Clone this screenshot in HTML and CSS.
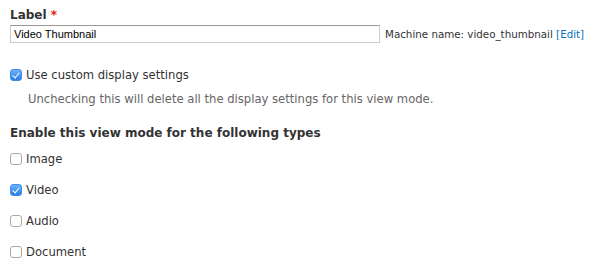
FILE: index.html
```html
<!DOCTYPE html>
<html lang="en">
<head>
  <meta charset="UTF-8" />
  <title>View mode</title>
  <link rel="stylesheet" href="styles.css">
</head>
<body>
  <form class="view-mode-form">
    <div class="form-item">
      <label class="form-label" for="label">Label <span class="required">*</span></label>
      <div class="machine-row">
        <input class="form-text" type="text" id="label" value="Video Thumbnail" />
        <span class="machine-name">Machine name: video_thumbnail <span class="edit">[<a href="#">Edit</a>]</span></span>
      </div>
    </div>

    <div class="form-item custom-settings">
      <label class="check">
        <span class="box checked"></span>
        Use custom display settings
      </label>
      <div class="description">Unchecking this will delete all the display settings for this view mode.</div>
    </div>

    <div class="form-item types">
      <div class="form-label">Enable this view mode for the following types</div>
      <label class="check type"><span class="box"></span>Image</label>
      <label class="check type"><span class="box checked"></span>Video</label>
      <label class="check type"><span class="box"></span>Audio</label>
      <label class="check type"><span class="box"></span>Document</label>
    </div>
  </form>
</body>
</html>
```

FILE: styles.css
```css
* {
  margin: 0;
  padding: 0;
  box-sizing: border-box;
}

body {
  background: #fff;
  color: #222;
  font-family: 'DejaVu Sans', 'Liberation Sans', sans-serif;
  font-size: 12px;
}

.view-mode-form {
  padding: 7px 10px;
}

.form-label {
  display: block;
  font-weight: bold;
  font-size: 12px;
  color: #333;
  line-height: 16px;
}

.required {
  color: #e32700;
}

.machine-row {
  display: flex;
  align-items: center;
  margin-top: 2px;
  white-space: nowrap;
}

.form-text {
  width: 370px;
  height: 18px;
  border: 1px solid #ccc;
  border-top-color: #999;
  padding: 0 3px;
  font-family: 'Liberation Sans', Arial, sans-serif;
  font-size: 11px;
  color: #000;
  outline: none;
}

.machine-name {
  margin-left: 5px;
  font-size: 10.3px;
  color: #333;
}

.machine-name a {
  color: #0074bd;
  text-decoration: none;
}

.edit {
  color: #0074bd;
}

.custom-settings {
  margin-top: 24px;
}

.check {
  display: flex;
  align-items: center;
  gap: 4px;
  font-size: 11.6px;
  color: #333;
  line-height: 16px;
}

.box {
  width: 12px;
  height: 12px;
  border: 1px solid #a8a8a8;
  border-radius: 3px;
  background: #fff;
  position: relative;
  flex: none;
}

.box.checked {
  border-color: #3d8ee8;
  background: linear-gradient(#6cb1fb, #2a7ee8);
}

.box.checked::after {
  content: '';
  position: absolute;
  left: 3px;
  top: 1px;
  width: 3px;
  height: 6px;
  border: solid #fff;
  border-width: 0 1.5px 1.5px 0;
  transform: rotate(40deg);
}

.description {
  margin: 8px 0 0 18px;
  font-size: 11.6px;
  color: #666;
  line-height: 16px;
}

.types {
  margin-top: 18px;
}

.type {
  margin-top: 15px;
}

.types .form-label + .type {
  margin-top: 10px;
}
```
